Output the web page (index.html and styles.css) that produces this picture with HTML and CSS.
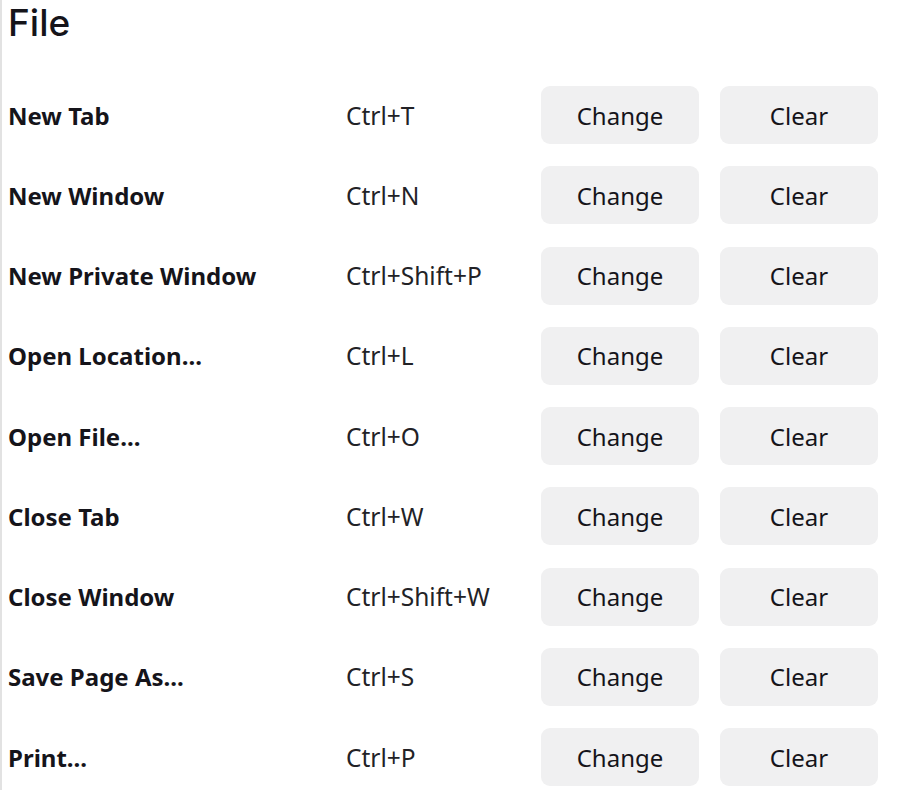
FILE: index.html
```html
<!DOCTYPE html>
<html lang="en">
<head>
<meta charset="utf-8">
<title>File shortcuts</title>
<link rel="stylesheet" href="styles.css">
</head>
<body>
<main class="page">
  <h1 class="title">File</h1>
  <div class="list">
    <div class="row"><span class="label">New Tab</span><span class="keys">Ctrl+T</span><div class="actions"><button class="btn">Change</button><button class="btn">Clear</button></div></div>
    <div class="row"><span class="label">New Window</span><span class="keys">Ctrl+N</span><div class="actions"><button class="btn">Change</button><button class="btn">Clear</button></div></div>
    <div class="row"><span class="label">New Private Window</span><span class="keys">Ctrl+Shift+P</span><div class="actions"><button class="btn">Change</button><button class="btn">Clear</button></div></div>
    <div class="row"><span class="label">Open Location...</span><span class="keys">Ctrl+L</span><div class="actions"><button class="btn">Change</button><button class="btn">Clear</button></div></div>
    <div class="row"><span class="label">Open File...</span><span class="keys">Ctrl+O</span><div class="actions"><button class="btn">Change</button><button class="btn">Clear</button></div></div>
    <div class="row"><span class="label">Close Tab</span><span class="keys">Ctrl+W</span><div class="actions"><button class="btn">Change</button><button class="btn">Clear</button></div></div>
    <div class="row"><span class="label">Close Window</span><span class="keys">Ctrl+Shift+W</span><div class="actions"><button class="btn">Change</button><button class="btn">Clear</button></div></div>
    <div class="row"><span class="label">Save Page As...</span><span class="keys">Ctrl+S</span><div class="actions"><button class="btn">Change</button><button class="btn">Clear</button></div></div>
    <div class="row"><span class="label">Print...</span><span class="keys">Ctrl+P</span><div class="actions"><button class="btn">Change</button><button class="btn">Clear</button></div></div>
  </div>
</main>
</body>
</html>
```
FILE: styles.css
```css
html, body {
  margin: 0;
  padding: 0;
  background: #ffffff;
}
body {
  font-family: "Noto Sans", "Open Sans", sans-serif;
  color: #15141a;
}
.page {
  border-left: 2px solid #e2e2e2;
  padding-left: 6px;
  min-height: 790px;
  box-sizing: border-box;
}
.title {
  margin: 0;
  font-family: Inter, "Noto Sans", sans-serif;
  font-size: 37px;
  font-weight: 500;
  line-height: 45px;
  height: 86px;
}
.list {
  display: flex;
  flex-direction: column;
  gap: 22.25px;
}
.row {
  display: grid;
  grid-template-columns: 338px 195px auto;
  align-items: center;
  height: 58px;
}
.label {
  font-size: 24px;
  font-weight: 700;
}
.keys {
  font-size: 24.5px;
  font-weight: 400;
  color: #222226;
}
.actions {
  display: flex;
  gap: 21px;
}
.btn {
  width: 158px;
  height: 58px;
  border: none;
  border-radius: 9px;
  background: #f0f0f1;
  font-family: inherit;
  font-size: 24px;
  color: #15141a;
  padding: 0;
}
```
